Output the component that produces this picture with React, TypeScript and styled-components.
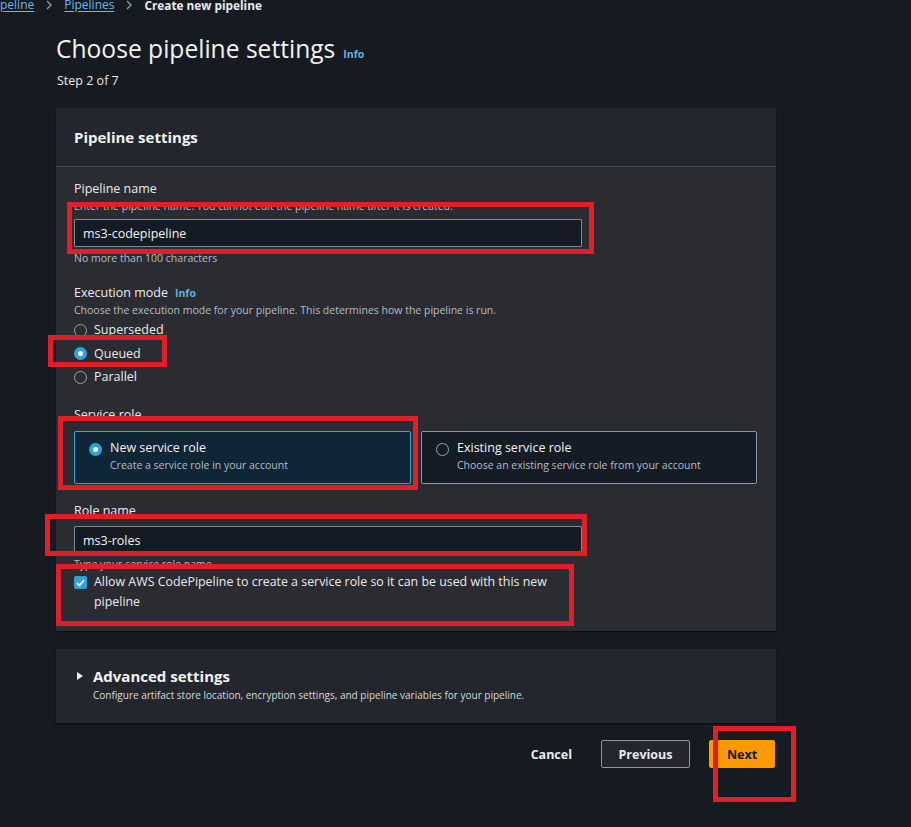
import React from 'react'
import styled, { createGlobalStyle } from 'styled-components'

const GlobalStyle = createGlobalStyle`
	html, body {
		margin: 0;
		padding: 0;
		background: #161a21;
	}
	body {
		font-family: 'Open Sans', 'Noto Sans', sans-serif;
		color: #e9ebed;
	}
`

const Canvas = styled.div`
	position: relative;
	width: 911px;
	height: 827px;
	overflow: hidden;
	background: #161a21;
`

const Breadcrumbs = styled.nav`
	display: flex;
	align-items: center;
	gap: 11px;
	height: 14px;
	margin-top: -2px;
	font-size: 12px;
	line-height: 14px;
`

const Crumb = styled.a`
	color: #6cb6ea;
	text-decoration: underline;
	text-underline-offset: 2px;
`

const CurrentCrumb = styled.span`
	color: #e9ebed;
	font-weight: 700;
	font-size: 11.8px;
`

const Chevron = styled.span`
	display: inline-flex;
	align-items: center;
`

const Main = styled.main`
	margin-left: 56px;
	width: 720px;
`

const TitleRow = styled.div`
	display: flex;
	align-items: baseline;
	gap: 8px;
	margin-top: 22px;
`

const Title = styled.h1`
	margin: 0;
	font-size: 24.6px;
	font-weight: 400;
	line-height: 30px;
	color: #f2f3f3;
`

const InfoLink = styled.a`
	color: #5fb3e0;
	font-size: 10.5px;
	font-weight: 700;
`

const Step = styled.div`
	margin-top: 9px;
	margin-left: 1px;
	font-size: 12.5px;
	line-height: 16px;
	color: #e9ebed;
`

const Panel = styled.section<{ $top?: number }>`
	margin-top: ${(p) => p.$top ?? 0}px;
	background: #2a2c31;
	box-shadow: 0 1px 1px rgba(0, 0, 0, 0.4);
`

const PanelHeader = styled.header`
	height: 58px;
	display: flex;
	align-items: center;
	padding: 0 18px;
	background: #23262d;
	border-bottom: 1px solid #43474e;
`

const PanelTitle = styled.h2`
	margin: 0;
	font-size: 15px;
	font-weight: 700;
	color: #f2f3f3;
`

const PanelBody = styled.div`
	padding: 14px 18px 19px 18px;
	display: flex;
	flex-direction: column;
`

const Field = styled.div<{ $gap?: number }>`
	margin-top: ${(p) => p.$gap ?? 0}px;
	display: flex;
	flex-direction: column;
`

const LabelRow = styled.div`
	display: flex;
	align-items: baseline;
	gap: 7px;
`

const Label = styled.label`
	font-size: 12.5px;
	line-height: 16px;
	color: #e9ebed;
`

const Description = styled.div`
	font-size: 10.5px;
	line-height: 18px;
	color: #b4bcc6;
`

const TextInput = styled.input<{ $top?: number }>`
	box-sizing: border-box;
	width: 508px;
	height: 28px;
	margin-top: ${(p) => p.$top ?? 4}px;
	padding: 0 8px;
	background: #141b24;
	border: 1px solid #7d8895;
	border-radius: 1px;
	color: #f2f3f3;
	font-family: inherit;
	font-size: 12.5px;
	outline: none;
`

const Hint = styled.div<{ $top?: number }>`
	margin-top: ${(p) => p.$top ?? 4}px;
	font-size: 10.5px;
	line-height: 14px;
	color: #b4bcc6;
`

const RadioList = styled.div`
	display: flex;
	flex-direction: column;
	gap: 7.5px;
	margin-top: 3px;
`

const RadioRow = styled.label`
	display: flex;
	align-items: center;
	gap: 7px;
	font-size: 12.5px;
	line-height: 16px;
	color: #e9ebed;
`

const RadioDot = styled.span<{ $checked?: boolean }>`
	box-sizing: border-box;
	width: 13px;
	height: 13px;
	border-radius: 50%;
	flex-shrink: 0;
	border: ${(p) => (p.$checked ? '4px solid #2fa3d8' : '1px solid #9aa4b0')};
	background: ${(p) => (p.$checked ? '#ffffff' : 'transparent')};
`

const Tiles = styled.div`
	display: grid;
	grid-template-columns: 337px 336px;
	gap: 10px;
	margin-top: 8px;
`

const Tile = styled.div<{ $selected?: boolean }>`
	box-sizing: border-box;
	height: 53px;
	display: flex;
	gap: 8px;
	padding: 8px 14px;
	background: ${(p) => (p.$selected ? '#0f2637' : '#161c25')};
	border: 1px solid ${(p) => (p.$selected ? '#3aa2cf' : '#8d97a3')};
	border-radius: 2px;
`

const TileDot = styled(RadioDot)`
	margin-top: 3px;
`

const TileText = styled.div`
	display: flex;
	flex-direction: column;
`

const TileTitle = styled.div`
	font-size: 12.5px;
	line-height: 16px;
	color: #f2f3f3;
`

const TileDesc = styled.div`
	font-size: 10.5px;
	line-height: 18px;
	color: #b4bcc6;
`

const CheckRow = styled.label`
	display: flex;
	gap: 7px;
	margin-top: 1px;
	font-size: 12.4px;
	line-height: 20px;
	color: #e9ebed;
	width: 480px;
`

const CheckBox = styled.span`
	box-sizing: border-box;
	width: 13px;
	height: 13px;
	margin-top: 4px;
	flex-shrink: 0;
	border-radius: 2px;
	background: #2fa3d8;
	display: flex;
	align-items: center;
	justify-content: center;
`

const AdvancedBody = styled.div`
	height: 74px;
	box-sizing: border-box;
	padding: 17px 18px 0 21px;
	display: flex;
	gap: 10px;
	background: #23262d;
`

const Caret = styled.span`
	width: 0;
	height: 0;
	margin-top: 6px;
	border-top: 4px solid transparent;
	border-bottom: 4px solid transparent;
	border-left: 6px solid #f2f3f3;
`

const AdvancedTitle = styled.div`
	font-size: 15px;
	font-weight: 700;
	line-height: 20px;
	color: #f2f3f3;
`

const AdvancedDesc = styled.div`
	font-size: 10px;
	line-height: 18px;
	color: #d5dbdb;
`

const Actions = styled.div`
	display: flex;
	justify-content: flex-end;
	align-items: center;
	gap: 19px;
	margin-top: 17px;
	margin-right: 1px;
`

const TextButton = styled.button`
	background: none;
	border: none;
	color: #e9ebed;
	font-family: inherit;
	font-weight: 700;
	font-size: 12.5px;
	padding: 0 10px;
`

const Button = styled.button<{ $primary?: boolean }>`
	box-sizing: border-box;
	height: 28px;
	padding: 0 16px;
	background: ${(p) => (p.$primary ? '#ff9900' : '#23262d')};
	border: 1px solid ${(p) => (p.$primary ? '#ff9900' : '#8d97a3')};
	border-radius: 2px;
	color: ${(p) => (p.$primary ? '#0f1b2a' : '#e9ebed')};
	font-family: inherit;
	font-weight: 700;
	font-size: 12.5px;
	min-width: ${(p) => (p.$primary ? '66px' : '89px')};
`

// red annotation rectangles drawn over the screenshot
const Mark = styled.div`
	position: absolute;
	box-sizing: border-box;
	border: 5px solid #e11f2a;
	pointer-events: none;
`

const marks = [
	{ left: 67, top: 202, width: 527, height: 52 },
	{ left: 48, top: 335, width: 119, height: 32 },
	{ left: 58, top: 416, width: 360, height: 74 },
	{ left: 45, top: 514, width: 542, height: 42 },
	{ left: 56, top: 564, width: 518, height: 62 },
	{ left: 713, top: 726, width: 83, height: 76 },
]

const ChevronIcon = () => (
	<svg width="8" height="10" viewBox="0 0 8 10">
		<path d="M2 1 L6 5 L2 9" fill="none" stroke="#8d99a8" strokeWidth="1.4" />
	</svg>
)

const Check = () => (
	<svg width="9" height="8" viewBox="0 0 9 8">
		<path d="M1 4.2 L3.5 6.5 L8 1.2" fill="none" stroke="#fff" strokeWidth="1.8" />
	</svg>
)

const App: React.FC = () => {
	return (
		<Canvas>
			<GlobalStyle />
			<Breadcrumbs>
				<Crumb>peline</Crumb>
				<Chevron>
					<ChevronIcon />
				</Chevron>
				<Crumb>Pipelines</Crumb>
				<Chevron>
					<ChevronIcon />
				</Chevron>
				<CurrentCrumb>Create new pipeline</CurrentCrumb>
			</Breadcrumbs>
			<Main>
				<TitleRow>
					<Title>Choose pipeline settings</Title>
					<InfoLink>Info</InfoLink>
				</TitleRow>
				<Step>Step 2 of 7</Step>

				<Panel $top={19}>
					<PanelHeader>
						<PanelTitle>Pipeline settings</PanelTitle>
					</PanelHeader>
					<PanelBody>
						<Field>
							<Label>Pipeline name</Label>
							<Description>
								Enter the pipeline name. You cannot edit the pipeline name after it is created.
							</Description>
							<TextInput defaultValue="ms3-codepipeline" />
							<Hint>No more than 100 characters</Hint>
						</Field>

						<Field $gap={20}>
							<LabelRow>
								<Label>Execution mode</Label>
								<InfoLink>Info</InfoLink>
							</LabelRow>
							<Description>
								Choose the execution mode for your pipeline. This determines how the pipeline is run.
							</Description>
							<RadioList>
								<RadioRow>
									<RadioDot />
									Superseded
								</RadioRow>
								<RadioRow>
									<RadioDot $checked />
									Queued
								</RadioRow>
								<RadioRow>
									<RadioDot />
									Parallel
								</RadioRow>
							</RadioList>
						</Field>

						<Field $gap={22}>
							<Label>Service role</Label>
							<Tiles>
								<Tile $selected>
									<TileDot $checked />
									<TileText>
										<TileTitle>New service role</TileTitle>
										<TileDesc>Create a service role in your account</TileDesc>
									</TileText>
								</Tile>
								<Tile>
									<TileDot />
									<TileText>
										<TileTitle>Existing service role</TileTitle>
										<TileDesc>Choose an existing service role from your account</TileDesc>
									</TileText>
								</Tile>
							</Tiles>
						</Field>

						<Field $gap={19}>
							<Label>Role name</Label>
							<TextInput defaultValue="ms3-roles" $top={7} />
							<Hint $top={3}>Type your service role name</Hint>
						</Field>

						<CheckRow>
							<CheckBox>
								<Check />
							</CheckBox>
							Allow AWS CodePipeline to create a service role so it can be used with this new
							pipeline
						</CheckRow>
					</PanelBody>
				</Panel>

				<Panel $top={18}>
					<AdvancedBody>
						<Caret />
						<div>
							<AdvancedTitle>Advanced settings</AdvancedTitle>
							<AdvancedDesc>
								Configure artifact store location, encryption settings, and pipeline variables for your
								pipeline.
							</AdvancedDesc>
						</div>
					</AdvancedBody>
				</Panel>

				<Actions>
					<TextButton>Cancel</TextButton>
					<Button>Previous</Button>
					<Button $primary>Next</Button>
				</Actions>
			</Main>
			{marks.map((m, i) => (
				<Mark key={i} style={m} />
			))}
		</Canvas>
	)
}

export default App
